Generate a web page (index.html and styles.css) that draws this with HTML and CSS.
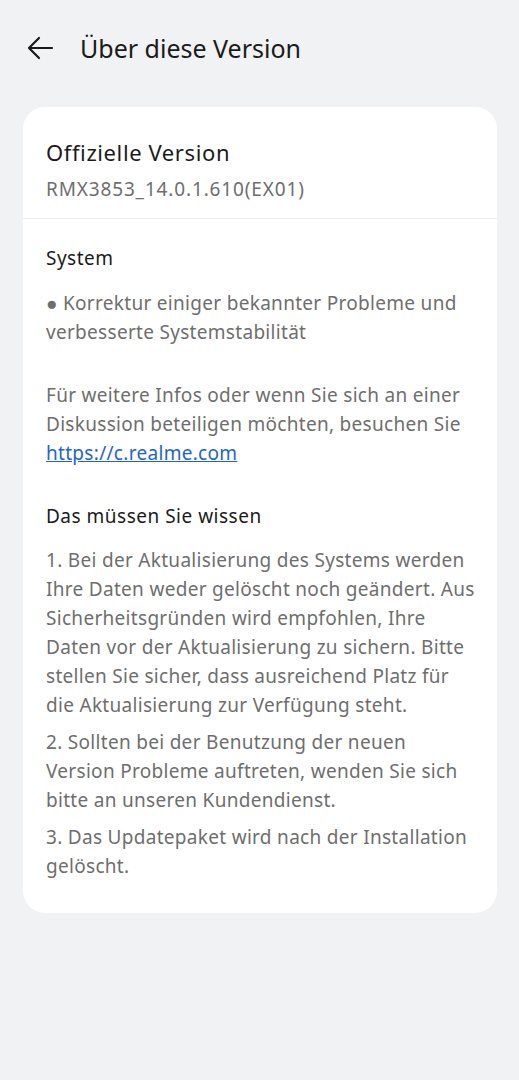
FILE: index.html
```html
<!DOCTYPE html>
<html>
<head>
  <meta charset="UTF-8" />
  <link rel="stylesheet" href="styles.css">
</head>
<body>
  <div class="header">
    <svg class="back" width="28" height="28" viewBox="0 0 28 28">
      <path d="M26 14H3M13 4L3 14l10 10" fill="none" stroke="#1a1a1a" stroke-width="2.2" stroke-linecap="round" stroke-linejoin="round"/>
    </svg>
    <h1 class="title">Über diese Version</h1>
  </div>

  <div class="card">
    <div class="card-top">
      <div class="version-title">Offizielle Version</div>
      <div class="version-number">RMX3853_14.0.1.610(EX01)</div>
    </div>

    <div class="card-body">
      <div class="section-title">System</div>
      <p class="text">● Korrektur einiger bekannter Probleme und verbesserte Systemstabilität</p>
      <p class="text para-gap">Für weitere Infos oder wenn Sie sich an einer Diskussion beteiligen möchten, besuchen Sie <a class="link" href="#">https://c.realme.com</a></p>

      <div class="section-title section-gap">Das müssen Sie wissen</div>
      <p class="text">1. Bei der Aktualisierung des Systems werden Ihre Daten weder gelöscht noch geändert. Aus Sicherheitsgründen wird empfohlen, Ihre Daten vor der Aktualisierung zu sichern. Bitte stellen Sie sicher, dass ausreichend Platz für die Aktualisierung zur Verfügung steht.</p>
      <p class="text item">2. Sollten bei der Benutzung der neuen Version Probleme auftreten, wenden Sie sich bitte an unseren Kundendienst.</p>
      <p class="text item">3. Das Updatepaket wird nach der Installation gelöscht.</p>
    </div>
  </div>
</body>
</html>
```

FILE: styles.css
```css
:root {
  --bg: #f1f2f4;
  --card: #ffffff;
  --text-dark: #1b1b1b;
  --text-grey: #6e6e6e;
  --divider: #efefef;
  --link: #1e63d6;
}

body {
  margin: 0;
  background: var(--bg);
  font-family: 'Noto Sans', sans-serif;
  color: var(--text-dark);
}

.header {
  display: flex;
  align-items: center;
  height: 96px;
  padding-left: 26px;
  box-sizing: border-box;
}

.back {
  flex: none;
}

.title {
  margin: 0 0 0 26px;
  font-size: 25px;
  font-weight: 400;
}

.card {
  margin: 11px 22px 0 23px;
  background: var(--card);
  border-radius: 22px;
}

.card-top {
  padding: 30px 23px 15px;
  border-bottom: 1px solid var(--divider);
}

.version-title {
  font-size: 22px;
  line-height: 30px;
  letter-spacing: 0.6px;
}

.version-number {
  margin-top: 8px;
  font-size: 19px;
  line-height: 28px;
  letter-spacing: 0.85px;
  color: var(--text-grey);
}

.card-body {
  padding: 25px 19px 32px 23px;
}

.section-title {
  font-size: 19px;
  line-height: 28px;
  letter-spacing: 0.5px;
  margin-bottom: 16.5px;
}

.section-gap {
  margin-top: 34px;
}

.text {
  margin: 0;
  font-size: 19px;
  line-height: 29px;
  letter-spacing: 0.3px;
  color: var(--text-grey);
}

.para-gap {
  margin-top: 34px;
}

.item {
  margin-top: 8px;
}

.link {
  color: var(--link);
}
```
